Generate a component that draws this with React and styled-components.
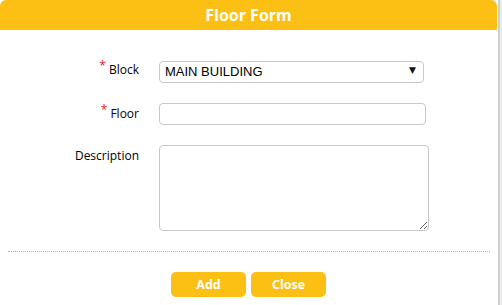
import React from 'react'
import { styled, createGlobalStyle } from 'styled-components';

const GlobalStyle = createGlobalStyle`
  html, body {
    margin: 0;
    padding: 0;
    background: #ffffff;
    overflow: hidden;
  }
`

const FloorForm = () => {
  return (
    <>
    <GlobalStyle />
    <StPage>
      <StDialog>
        <StHeader>Floor Form</StHeader>
        <StForm>
          <StRow>
            <StLabel><StStar>*</StStar> Block</StLabel>
            <StSelectWrap>
              <StSelect defaultValue="main">
                <option value="main">MAIN BUILDING</option>
              </StSelect>
              <StArrow>▼</StArrow>
            </StSelectWrap>
          </StRow>
          <StRow>
            <StLabel><StStar>*</StStar> Floor</StLabel>
            <StInput type="text" />
          </StRow>
          <StRow>
            <StLabel>Description</StLabel>
            <StTextArea />
          </StRow>
        </StForm>
        <StDivider />
        <StButtons>
          <StButton type="submit">Add</StButton>
          <StButton type="button">Close</StButton>
        </StButtons>
      </StDialog>
      <StEdge />
    </StPage>
    </>
  )
}

export default FloorForm;

const StPage = styled.div`
  display: flex;
  width: 502px;
  height: 305px;
`

const StDialog = styled.div`
  width: 497px;
  height: 305px;
  background: #fff;
  border-radius: 6px 6px 0 0;
  overflow: hidden;
  font-family: "Open Sans", "DejaVu Sans", sans-serif;
`

const StEdge = styled.div`
  flex: 1;
  margin-left: 1px;
  border-left: 2px solid #cfcfcf;
  background: #ececec;
`

const StHeader = styled.div`
  height: 30px;
  background: #fcbf14;
  color: #fff;
  font-weight: bold;
  font-size: 16px;
  line-height: 30px;
  text-align: center;
`

const StForm = styled.form`
  display: flex;
  flex-direction: column;
  gap: 20px;
  padding-top: 29px;
`

const StRow = styled.div`
  display: flex;
  align-items: flex-start;
`

const StLabel = styled.label`
  width: 139px;
  margin-right: 20px;
  text-align: right;
  font-size: 12px;
  line-height: 22px;
  color: #000;
`

const StStar = styled.span`
  color: #e3201b;
  font-size: 12px;
  vertical-align: 4px;
  line-height: 0;
`

const StSelectWrap = styled.div`
  position: relative;
  width: 265px;
`

const StSelect = styled.select`
  appearance: none;
  width: 100%;
  height: 22px;
  box-sizing: border-box;
  border: 1px solid #c8c8c8;
  border-radius: 4px;
  background: #fff;
  padding: 0 0 0 5px;
  font-family: "Liberation Sans", Arial, sans-serif;
  font-size: 13px;
  color: #000;
  outline: none;
`

const StArrow = styled.span`
  position: absolute;
  right: 8px;
  top: 5px;
  font-size: 9px;
  line-height: 12px;
  color: #111;
  pointer-events: none;
`

const StInput = styled.input`
  width: 267px;
  height: 22px;
  box-sizing: border-box;
  border: 1px solid #c8c8c8;
  border-radius: 4px;
  padding: 0 5px;
  outline: none;
`

const StTextArea = styled.textarea`
  width: 270px;
  height: 86px;
  box-sizing: border-box;
  border: 1px solid #c8c8c8;
  border-radius: 4px;
  padding: 3px 5px;
  outline: none;
`

const StDivider = styled.div`
  margin: 20px 7px 0 8px;
  border-top: 1px dotted #b0b0b0;
`

const StButtons = styled.div`
  display: flex;
  justify-content: center;
  gap: 5px;
  padding-top: 20px;
`

const StButton = styled.button`
  width: 75px;
  height: 25px;
  border: none;
  border-radius: 5px;
  background: #fcbf14;
  color: #fff;
  font-family: "Open Sans", "DejaVu Sans", sans-serif;
  font-weight: bold;
  font-size: 12.5px;
  padding: 0;
`
